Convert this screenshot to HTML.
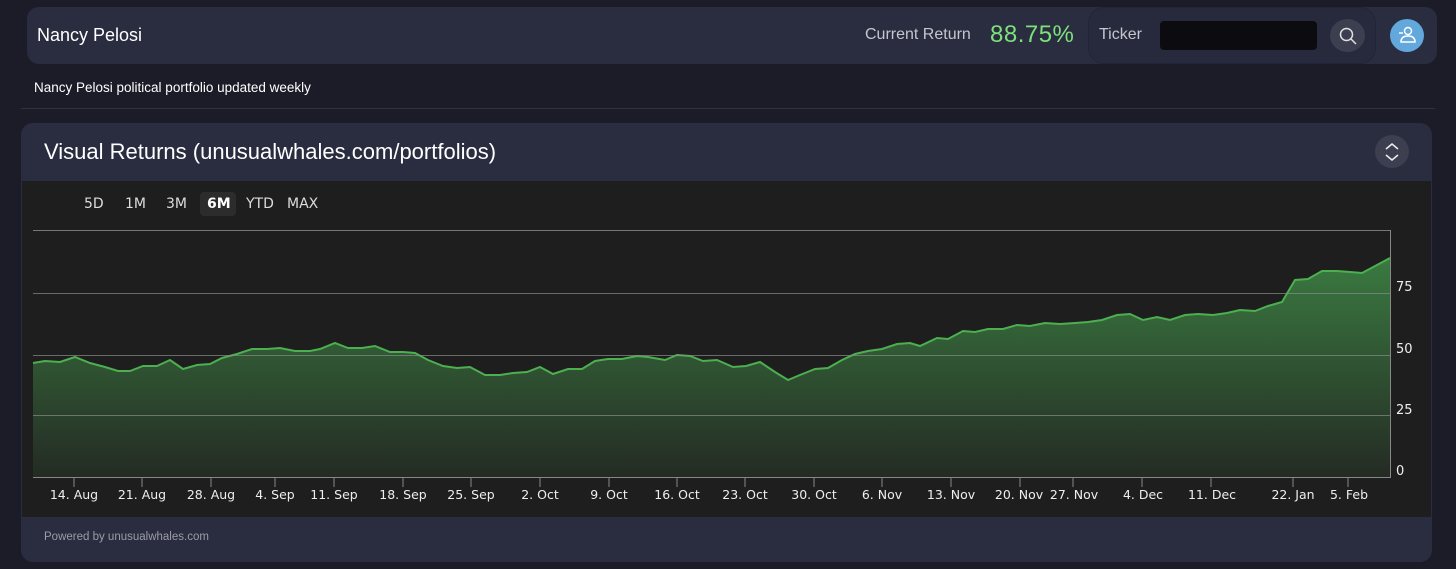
<!DOCTYPE html>
<html><head><style>
body{margin:0;width:1456px;height:569px;background:#1b1c27;font-family:"Liberation Sans",sans-serif;position:relative;overflow:hidden}
.abs{position:absolute}
</style></head><body>
<div class="abs" style="left:27px;top:7px;width:1410px;height:57px;background:#2a2d40;border-radius:12px"></div>
<div class="abs" style="left:37px;top:25px;color:#fff;font-size:18px">Nancy Pelosi</div>
<div class="abs" style="left:865px;top:26px;color:#c4c6cc;font-size:16px">Current Return</div>
<div class="abs" style="left:990px;top:21px;color:#7de07a;font-size:24px;letter-spacing:0.5px">88.75%</div>
<div class="abs" style="left:1088px;top:7px;width:288px;height:57px;border-radius:16px;background:#272a3c;border:1px solid #22253a;box-sizing:border-box"></div>
<div class="abs" style="left:1099px;top:26px;color:#c4c6cc;font-size:16px">Ticker</div>
<div class="abs" style="left:1160px;top:21px;width:157px;height:29px;background:#0c0c10;border-radius:4px"></div>
<div class="abs" style="left:1330px;top:19px;width:35px;height:33px;background:#3c3f50;border-radius:50%"></div>
<svg class="abs" style="left:1338px;top:26px" width="20" height="20" viewBox="0 0 20 20"><circle cx="8.5" cy="8.5" r="6" fill="none" stroke="#e0e0e0" stroke-width="1.5"/><line x1="13" y1="13" x2="18" y2="18" stroke="#e0e0e0" stroke-width="1.5"/></svg>
<div class="abs" style="left:1390px;top:19px;width:34px;height:33px;background:#63a8dc;border-radius:50%"></div>
<svg class="abs" style="left:1396px;top:24px" width="22" height="22" viewBox="0 0 22 22"><circle cx="12" cy="7" r="3.5" fill="none" stroke="#fff" stroke-width="1.5"/><path d="M5 18 Q5 12 12 12 Q19 12 19 18 Z" fill="none" stroke="#fff" stroke-width="1.5"/><line x1="3" y1="9" x2="7" y2="9" stroke="#fff" stroke-width="1.5"/></svg>
<div class="abs" style="left:34px;top:80px;color:#fff;font-size:13.5px">Nancy Pelosi political portfolio updated weekly</div>
<div class="abs" style="left:21px;top:108px;width:1414px;height:1px;background:#30323f"></div>

<div class="abs" style="left:21px;top:123px;width:1411px;height:439px;background:#2a2d40;border-radius:12px;overflow:hidden">
 <div class="abs" style="left:1px;top:58px;width:1409px;height:336px;background:#1e1e1e"></div>
</div>
<div class="abs" style="left:44px;top:139px;color:#fff;font-size:22px">Visual Returns (unusualwhales.com/portfolios)</div>
<div class="abs" style="left:1375px;top:135px;width:34px;height:33px;background:#3c3f50;border-radius:50%"></div>
<svg class="abs" style="left:1382px;top:141px" width="20" height="22" viewBox="0 0 20 22"><path d="M4 8 L10 3 L16 8 M4 14 L10 19 L16 14" fill="none" stroke="#eee" stroke-width="1.5"/></svg>
<div class="abs" style="left:200px;top:192px;width:36px;height:24px;background:#2c2c2c;border-radius:4px"></div>
<div class="abs" style="top:196px;left:0;font-size:14px;color:#ddd;font-family:'DejaVu Sans',sans-serif">
<span class="abs" style="left:84px">5D</span><span class="abs" style="left:125px">1M</span><span class="abs" style="left:166px">3M</span><span class="abs" style="left:207px;font-weight:bold;color:#fff">6M</span><span class="abs" style="left:246px">YTD</span><span class="abs" style="left:287px">MAX</span></div>
<svg class="abs" style="left:0;top:0" width="1456" height="569">
<defs><linearGradient id="g" x1="0" y1="0" x2="0" y2="1"><stop offset="0" stop-color="#3a7a40"/><stop offset="1" stop-color="#242b24"/></linearGradient></defs>
<line x1="33" y1="230.5" x2="1390" y2="230.5" stroke="#777"/>
<path fill="url(#g)" d="M33 363 L45 361 60 362 75 357 90 363 105 367 118 371 130 371 143 366 157 366 170 360 183 369 197 365 210 364 222 358 237 354 252 349 267 349 280 348 295 351 310 351 320 349 335 343 348 348 362 348 375 346 390 352 403 352 415 353 428 360 443 366 457 368 470 367 485 375 500 375 513 373 527 372 540 367 553 374 568 369 582 369 595 361 608 359 622 359 637 356 648 357 665 360 677 355 690 356 703 361 717 360 733 367 746 366 760 362 775 372 788 380 800 375 815 369 828 368 842 360 855 354 868 351 882 349 897 344 910 343 920 346 937 338 948 339 963 331 975 332 988 329 1003 329 1017 325 1030 326 1045 323 1060 324 1075 323 1088 322 1102 320 1117 315 1130 314 1143 320 1157 317 1170 320 1185 315 1198 314 1213 315 1227 313 1240 310 1255 311 1268 306 1282 302 1295 280 1308 279 1322 271 1337 271 1350 272 1362 273 1377 265 1390 258 L1390 477 L33 477 Z"/>
<path fill="none" stroke="#4caf50" stroke-width="2" d="M33 363 L45 361 60 362 75 357 90 363 105 367 118 371 130 371 143 366 157 366 170 360 183 369 197 365 210 364 222 358 237 354 252 349 267 349 280 348 295 351 310 351 320 349 335 343 348 348 362 348 375 346 390 352 403 352 415 353 428 360 443 366 457 368 470 367 485 375 500 375 513 373 527 372 540 367 553 374 568 369 582 369 595 361 608 359 622 359 637 356 648 357 665 360 677 355 690 356 703 361 717 360 733 367 746 366 760 362 775 372 788 380 800 375 815 369 828 368 842 360 855 354 868 351 882 349 897 344 910 343 920 346 937 338 948 339 963 331 975 332 988 329 1003 329 1017 325 1030 326 1045 323 1060 324 1075 323 1088 322 1102 320 1117 315 1130 314 1143 320 1157 317 1170 320 1185 315 1198 314 1213 315 1227 313 1240 310 1255 311 1268 306 1282 302 1295 280 1308 279 1322 271 1337 271 1350 272 1362 273 1377 265 1390 258"/>
<g stroke="#8a8a8a" stroke-opacity="0.7"><line x1="33" y1="293.5" x2="1390" y2="293.5"/><line x1="33" y1="355.5" x2="1390" y2="355.5"/><line x1="33" y1="415.5" x2="1390" y2="415.5"/></g>
<line x1="1390.5" y1="230" x2="1390.5" y2="478" stroke="#888"/>
<line x1="33" y1="477.5" x2="1391" y2="477.5" stroke="#888"/>
<g fill="#eee" font-size="13" font-family="DejaVu Sans,sans-serif"><text x="1396" y="291">75</text><text x="1396" y="353">50</text><text x="1396" y="414">25</text><text x="1396" y="475">0</text></g>
<g stroke="#888">
<line x1="74" y1="477" x2="74" y2="487"/><line x1="142" y1="477" x2="142" y2="487"/><line x1="211" y1="477" x2="211" y2="487"/><line x1="275" y1="477" x2="275" y2="487"/><line x1="334" y1="477" x2="334" y2="487"/><line x1="403" y1="477" x2="403" y2="487"/><line x1="471" y1="477" x2="471" y2="487"/><line x1="540" y1="477" x2="540" y2="487"/>
<line x1="609" y1="477" x2="609" y2="487"/><line x1="677" y1="477" x2="677" y2="487"/><line x1="745" y1="477" x2="745" y2="487"/><line x1="814" y1="477" x2="814" y2="487"/><line x1="882" y1="477" x2="882" y2="487"/><line x1="951" y1="477" x2="951" y2="487"/><line x1="1020" y1="477" x2="1020" y2="487"/><line x1="1073" y1="477" x2="1073" y2="487"/><line x1="1142" y1="477" x2="1142" y2="487"/><line x1="1211" y1="477" x2="1211" y2="487"/><line x1="1293" y1="477" x2="1293" y2="487"/><line x1="1348" y1="477" x2="1348" y2="487"/>
</g>
<g fill="#eee" font-size="12.5" font-family="DejaVu Sans,sans-serif" text-anchor="middle">
<text x="74" y="499">14. Aug</text><text x="142" y="499">21. Aug</text><text x="211" y="499">28. Aug</text><text x="275" y="499">4. Sep</text><text x="334" y="499">11. Sep</text><text x="403" y="499">18. Sep</text><text x="471" y="499">25. Sep</text><text x="540" y="499">2. Oct</text><text x="609" y="499">9. Oct</text><text x="677" y="499">16. Oct</text><text x="745" y="499">23. Oct</text><text x="814" y="499">30. Oct</text><text x="882" y="499">6. Nov</text><text x="951" y="499">13. Nov</text><text x="1019" y="499">20. Nov</text><text x="1074" y="499">27. Nov</text><text x="1143" y="499">4. Dec</text><text x="1212" y="499">11. Dec</text><text x="1293" y="499">22. Jan</text><text x="1349" y="499">5. Feb</text>
</g>
</svg>
<div class="abs" style="left:44px;top:531px;color:#9a9ca6;font-size:11.5px">Powered by unusualwhales.com</div>
</body></html>
